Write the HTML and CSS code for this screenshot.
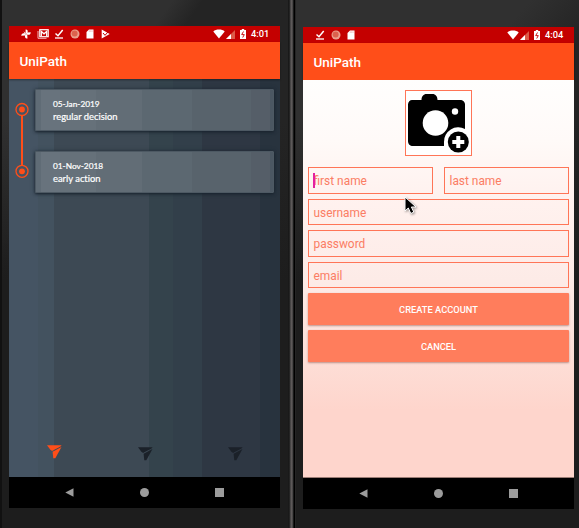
FILE: index.html
```html
<!DOCTYPE html>
<html lang="en">
<head>
<meta charset="utf-8">
<title>UniPath</title>
<link rel="stylesheet" href="styles.css">
</head>
<body>
<svg class="defs" width="0" height="0">
  <symbol id="pinwheel" viewBox="0 0 10 10"><path d="M4.600 4V.5C6.500.3 7.300 2 6.400 3.600L9.700 3.200C9.700 5.500 8 6.300 6.200 5.500L6.500 9.500C4.500 10 3.500 8.200 4.200 6.500L.3 6.800C.3 4.700 2 3.800 3.700 4.500L2.500 2.300zM4.500 4.600v1h1v-1z" fill="#fff" fill-rule="evenodd"/></symbol>
  <symbol id="mail" viewBox="0 0 12 10"><path d="M1 2v7.300h8.500" stroke="#f3b5b5" fill="none"/><rect x="2.800" y=".7" width="8.400" height="7" fill="none" stroke="#fff" stroke-width="1.200"/><path d="M4.300 7V2.500L7 4.800l2.700-2.300V7" fill="none" stroke="#fff" stroke-width="1.300"/></symbol>
  <symbol id="done" viewBox="0 0 10 10"><path d="M1.500 4.500 4 6.700 8.700 1" fill="none" stroke="#fff" stroke-width="1.500"/><path d="M1 9h8" stroke="#fff" stroke-width="1.300"/></symbol>
  <symbol id="ball" viewBox="0 0 10 10"><circle cx="5" cy="5" r="4.500" fill="#eba08c"/><circle cx="4.600" cy="4.600" r="3" fill="#dc624d"/></symbol>
  <symbol id="sd" viewBox="0 0 8 10"><path d="M3 .5h4.500v9H.5V3z" fill="#fff"/><path d="M3.300 1.500v1.200M4.700 1.500v1.200M6.100 1.500v1.200" stroke="#d77" stroke-width=".6"/></symbol>
  <symbol id="play" viewBox="0 0 9 10"><path d="M.7.500 8.700 5 .7 9.500z" fill="#fff"/><path d="m2 4 2 2.300L7 3" fill="none" stroke="#c40000"/></symbol>
  <symbol id="wifi" viewBox="0 0 12 10"><path d="M.3 2.500C3-.1 9-.1 11.700 2.500L6 9.600z" fill="#fff"/></symbol>
  <symbol id="signal" viewBox="0 0 9 9"><path d="M9 0v9H0z" fill="#dc5b48"/><path d="M5 4v5H0z" fill="#fff"/></symbol>
  <symbol id="battery" viewBox="0 0 6 10"><path d="M1.800 0h2.400v1H6v9H0V1h1.800z" fill="#fff"/><path d="M3.500 2.500 1.700 5.600h2.600L2.700 8.500" fill="none" stroke="#c40000" stroke-width=".9"/></symbol>
  <symbol id="send" viewBox="0 0 15 14"><path d="M0 .2H14.600L13.500 1.500 5 5.900 3 4.200z"/><path d="M14.500 1.900 8.300 13.200H6.300L5.600 6.700z"/></symbol>
  <symbol id="nav-back" viewBox="0 0 9 9"><path d="M.3 4.500 8.500.3v8.400z" fill="#9c9c9c"/></symbol>
</svg>
<main class="stage">
  <section class="phone phone-left">
    <div class="screen">
      <header class="status">
        <svg class="s10"><use href="#pinwheel"/></svg>
        <svg class="s12"><use href="#mail"/></svg>
        <svg class="s10 done"><use href="#done"/></svg>
        <svg class="s10 ball"><use href="#ball"/></svg>
        <svg class="s8"><use href="#sd"/></svg>
        <svg class="s9"><use href="#play"/></svg>
        <div class="system">
          <svg class="s12 wifi"><use href="#wifi"/></svg>
          <svg class="sig"><use href="#signal"/></svg>
          <svg class="bat"><use href="#battery"/></svg>
          <span class="clock">4:01</span>
        </div>
      </header>
      <h1 class="appbar">UniPath</h1>
      <div class="timeline-page">
        <div class="timeline">
          <svg class="rail" width="26" height="120" viewBox="0 0 26 120">
            <g fill="none" stroke="#ff4e19"><path d="M13 36.500v50" stroke-width="2"/><circle cx="13" cy="30.500" r="6" stroke-width="1.300"/><circle cx="13" cy="92.300" r="6" stroke-width="1.300"/></g>
            <circle cx="13" cy="30.500" r="2.900" fill="#ff4e19"/><circle cx="13" cy="92.300" r="2.900" fill="#ff4e19"/>
          </svg>
          <div class="cards">
            <article class="card"><time>05-Jan-2019</time><p>regular decision</p></article>
            <article class="card"><time>01-Nov-2018</time><p>early action</p></article>
          </div>
        </div>
        <nav class="tabs">
          <svg class="tab active"><use href="#send"/></svg>
          <svg class="tab"><use href="#send"/></svg>
          <svg class="tab"><use href="#send"/></svg>
        </nav>
      </div>
      <footer class="navbar"><svg class="back"><use href="#nav-back"/></svg><i class="home"></i><i class="recent"></i></footer>
    </div>
  </section>
  <div class="edge"></div>
  <section class="phone phone-right">
    <div class="screen">
      <header class="status">
        <svg class="s10 done"><use href="#done"/></svg>
        <svg class="s10 ball"><use href="#ball"/></svg>
        <svg class="s8"><use href="#sd"/></svg>
        <div class="system">
          <svg class="s12 wifi"><use href="#wifi"/></svg>
          <svg class="sig"><use href="#signal"/></svg>
          <svg class="bat"><use href="#battery"/></svg>
          <span class="clock">4:04</span>
        </div>
      </header>
      <h1 class="appbar">UniPath</h1>
      <div class="form">
        <div class="photo">
          <svg width="64" height="64" viewBox="0 0 64 64">
            <path d="M6 9h9.500c0-3.500 2-6 5-6h6c3 0 5 2.500 5 6H54c3 0 5 2 5 4.500V55H7c-3 0-5-2-5-5V13.500C2 11 4 9 6 9z"/>
            <circle cx="29.500" cy="32" r="12.800" fill="#fff"/><circle cx="49" cy="20.500" r="3.200" fill="#fff"/>
            <path d="M38 58V51a14.300 14.300 0 0 1 21-13h3v20z" fill="#fff"/>
            <circle cx="52.300" cy="51" r="10.500"/><path d="M52.300 45v12M46.300 51h12" stroke="#fff" stroke-width="4"/>
          </svg>
        </div>
        <div class="names">
          <div class="field first"><span>first name</span></div>
          <div class="field"><span>last name</span></div>
        </div>
        <div class="field">username</div>
        <div class="field">password</div>
        <div class="field">email</div>
        <button class="button">CREATE ACCOUNT</button>
        <button class="button">CANCEL</button>
        <svg class="pointer" width="13" height="19" viewBox="0 0 13 19"><path d="M1 1v14l3.300-3 2.500 5.500 3-1.400-2.400-5.100H12z" fill="#000" stroke="#fff"/></svg>
      </div>
      <footer class="navbar"><svg class="back"><use href="#nav-back"/></svg><i class="home"></i><i class="recent"></i></footer>
    </div>
  </section>
</main>
</body>
</html>
```
FILE: styles.css
```css
* { box-sizing: border-box; }
body { margin: 0; background: #1c1c1c; font-family: Roboto, sans-serif; }
.defs { display: block; height: 0; }
svg { display: block; flex: none; }
.stage { display: flex; width: 579px; height: 528px; overflow: hidden; }
.phone { height: 528px; }
.phone-left {
  width: 288px; padding: 26px 8px 0 7px; border-left: 2px solid #111;
  background: linear-gradient(#0000 120px, #1d1d1d 280px), linear-gradient(125deg, #303030 0 140px, #242424 165px);
}
.phone-right {
  width: 283px; padding: 27px 5px 0 7px;
  background: linear-gradient(#0000 120px, #1d1d1d 280px), linear-gradient(132deg, #303030 0 175px, #232323 240px);
}
.edge {
  width: 8px;
  background: linear-gradient(90deg, #191919 0 1px, #303030 2px, #5d5959 3px 4px, #343434 5px, #000 6px 7px, #242424 7px);
}
.screen { width: 271px; height: 482px; display: flex; flex-direction: column; }
.status { height: 16px; flex: none; display: flex; align-items: center; gap: 6px; padding: 0 10px 0 12px; background: #c40000; }
.s10 { width: 10px; height: 10px; }
.s12 { width: 12px; height: 10px; }
.s9 { width: 9px; height: 10px; margin-left: 1px; }
.s8 { width: 8px; height: 10px; }
.s12 + .done { margin-left: -1px; }
.system { margin-left: auto; display: flex; align-items: center; }
.wifi { margin-right: 1px; }
.sig { width: 9px; height: 9px; margin-right: 5px; }
.bat { width: 6px; height: 10px; margin-right: 5px; }
.clock { width: 19px; color: #fff; font: 500 9.300px/16px Roboto, sans-serif; white-space: nowrap; }
.appbar {
  height: 37px; flex: none; margin: 0; padding: 0 0 0 10.500px; background: #ff4e19; color: #fff;
  font: 500 13.500px/38px Roboto, sans-serif; position: relative; box-shadow: 0 1px 2px #0006;
}
.timeline-page {
  height: 398px; flex: none; display: flex; flex-direction: column; justify-content: space-between;
  background: linear-gradient(90deg, #455463 0 29px, #43525f 29px 45px, #3d4954 45px 140px, #34434c 140px 164px, #323f4a 164px 193px, #2e3743 193px 251px, #28333e 251px);
}
.timeline { display: flex; }
.cards { width: 238.500px; padding-top: 9.500px; display: flex; flex-direction: column; gap: 19.500px; }
.card {
  height: 42.500px; padding: 10px 0 0 17px; border-radius: 1px; color: #fff; font-family: Lato, sans-serif;
  background: linear-gradient(90deg, #606c76 0 5px, #68737d 5px 24px, #66717a 24px 60px, #626d76 60px 106px, #5c6871 106px 156px, #58636c 156px 215px, #555e68 215px 234px, #4b5762 234px);
  box-shadow: 0 1px 3px #18232d, 0 0 5px #18232d66; border: 1px solid #4d5963;
}
.card time { display: block; font-size: 8.300px; line-height: 11px; margin-top: -1px; -webkit-text-stroke: .2px #fff; }
.card p { margin: 1px 0 0; font-size: 9.400px; line-height: 12px; white-space: nowrap; font-variant-ligatures: none; -webkit-text-stroke: .2px #fff; }
.tabs { display: flex; justify-content: space-between; padding: 0 37px 16px 38px; align-items: flex-end; }
.tab { width: 15px; height: 14px; fill: #1b2129; }
.tab.active { fill: #ff4e19; margin-bottom: 2px; }
.navbar { height: 31px; flex: none; background: #000; display: flex; align-items: center; justify-content: space-between; padding: 0 56px; }
.back, .home, .recent { width: 9px; height: 9px; background: #9c9c9c; }
.back { background: none; }
.home { border-radius: 50%; }
.form {
  height: 398px; flex: none; position: relative; display: flex; flex-direction: column; gap: 5px; padding: 10px 5px 0;
  background: linear-gradient(#fffefd 0, #fffaf8 60px, #fff2ef 115px, #fdebe7 200px, #fddfd8 275px, #fed5cc 330px);
  border-bottom: 1px solid #9c7d76;
}
.photo { width: 67px; height: 66px; margin: 0 0 6px 97px; border: 1px solid #ff7557; background: #fff; flex: none; }
.names { display: grid; grid-template-columns: 1fr 1fr; gap: 11px; }
.field { height: 26.500px; flex: none; border: 1px solid #ff7557; padding: 1px 4.500px; color: #fb7d64; font-size: 11.900px; line-height: 25px; white-space: nowrap; }
.first { position: relative; }
.first::before { content: ""; position: absolute; left: 4px; top: 5px; width: 1.500px; height: 15px; background: #e421a0; }
.button {
  height: 32px; flex: none; border: 0; border-radius: 1px; padding: 1px 0 0; color: #fff; background: #ff7d5c;
  font: 500 9.300px/32px Roboto, sans-serif; box-shadow: 0 1px 2px #7e443c80;
}
.pointer { position: absolute; left: 100.500px; top: 116px; filter: drop-shadow(1px 1px 1px #0006); }
```
